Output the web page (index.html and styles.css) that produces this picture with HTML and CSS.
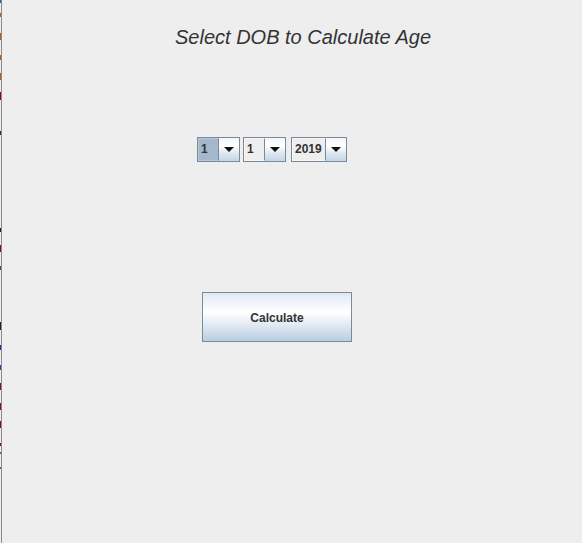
FILE: index.html
```html
<!DOCTYPE html>
<html>
<head>
<meta charset="utf-8">
<title>Age Calculator</title>
<link rel="stylesheet" href="styles.css">
</head>
<body>
<div class="frame">
  <div class="edge"></div>
  <div class="edge-line"></div>
  <main class="content">
    <h1 class="title">Select DOB to Calculate Age</h1>
    <div class="combos">
      <div class="combo combo-day">
        <div class="combo-field selected">1</div>
        <div class="combo-arrow"><span class="tri"></span></div>
      </div>
      <div class="combo combo-month">
        <div class="combo-field">1</div>
        <div class="combo-arrow"><span class="tri"></span></div>
      </div>
      <div class="combo combo-year">
        <div class="combo-field">2019</div>
        <div class="combo-arrow"><span class="tri"></span></div>
      </div>
    </div>
    <button class="calc-btn" type="button">Calculate</button>
  </main>
</div>
</body>
</html>
```
FILE: styles.css
```css
html, body {
  margin: 0;
  padding: 0;
  background: #eeeeee;
  font-family: "Liberation Sans", Arial, sans-serif;
  color: #333333;
}

.frame {
  display: flex;
  width: 582px;
  height: 543px;
  overflow: hidden;
}

.edge {
  width: 1px;
  flex: none;
  background: linear-gradient(to bottom,
    #3a5a8a 0px, #3a5a8a 3px, #eeeeee 3px,
    #eeeeee 13px, #b06010 13px, #b06010 17px, #eeeeee 17px,
    #eeeeee 33px, #b06010 33px, #b06010 40px, #eeeeee 40px,
    #eeeeee 55px, #b06010 55px, #b06010 60px, #eeeeee 60px,
    #eeeeee 73px, #b06010 73px, #b06010 80px, #eeeeee 80px,
    #eeeeee 92px, #900050 92px, #900050 100px, #eeeeee 100px,
    #eeeeee 131px, #203050 131px, #203050 135px, #eeeeee 135px,
    #eeeeee 228px, #202020 228px, #202020 232px, #eeeeee 232px,
    #eeeeee 245px, #900050 245px, #900050 252px, #eeeeee 252px,
    #eeeeee 266px, #804020 266px, #804020 270px, #eeeeee 270px,
    #eeeeee 322px, #202020 322px, #202020 330px, #eeeeee 330px,
    #eeeeee 345px, #203090 345px, #203090 350px, #eeeeee 350px,
    #eeeeee 365px, #3040c0 365px, #3040c0 370px, #eeeeee 370px,
    #eeeeee 383px, #900050 383px, #900050 390px, #eeeeee 390px,
    #eeeeee 403px, #900050 403px, #900050 410px, #eeeeee 410px,
    #eeeeee 421px, #900050 421px, #900050 428px, #eeeeee 428px,
    #eeeeee 443px, #900050 443px, #900050 446px, #eeeeee 446px,
    #eeeeee 452px, #3060c0 452px, #3060c0 454px, #eeeeee 454px,
    #eeeeee 467px, #3060c0 467px, #3060c0 469px, #eeeeee 469px);
}

.edge-line {
  width: 1px;
  flex: none;
  background: #8a8a8a;
}

.content {
  flex: 1;
  display: flex;
  flex-direction: column;
  align-items: flex-start;
}

.title {
  margin: 26px 0 0 173px;
  font-size: 20px;
  line-height: 23px;
  font-style: italic;
  font-weight: normal;
  color: #333333;
  white-space: nowrap;
}

.combos {
  display: flex;
  gap: 3px;
  margin: 88px 0 0 195px;
}

.combo-year {
  margin-left: 2px;
}

.combo {
  display: flex;
  height: 25px;
  box-sizing: border-box;
  border: 1px solid #7a8a99;
  background: #eeeeee;
}

.combo-day { width: 43px; }
.combo-month { width: 43px; }
.combo-year { width: 56px; }

.combo-field {
  flex: 1;
  box-sizing: border-box;
  border: 1px solid #f6f6f6;
  border-right: 1px solid #7a8a99;
  padding: 0 0 0 2px;
  font-size: 12px;
  font-weight: bold;
  line-height: 21px;
  color: #333333;
  background: #eeeeee;
}

.combo-field.selected {
  background: #a3b8cc;
  border-color: #b8c8d8;
  border-right-color: #7a8a99;
}

.combo-arrow {
  width: 20px;
  flex: none;
  display: flex;
  align-items: center;
  justify-content: center;
  background: linear-gradient(to bottom, #f2f6fa 0%, #ffffff 35%, #dbe5ef 70%, #c6d6e6 100%);
}

.tri {
  width: 0;
  height: 0;
  border-left: 5px solid transparent;
  border-right: 5px solid transparent;
  border-top: 5px solid #111111;
}

.calc-btn {
  margin: 130px 0 0 200px;
  width: 150px;
  height: 50px;
  box-sizing: border-box;
  border: 1px solid #7a8a99;
  border-radius: 0;
  padding: 2px 0 0 0;
  font-family: "Liberation Sans", Arial, sans-serif;
  font-size: 12px;
  font-weight: bold;
  color: #333333;
  background: linear-gradient(to bottom, #dfe9f4 0%, #ffffff 40%, #dde7f1 70%, #b8cde2 100%);
}
```
